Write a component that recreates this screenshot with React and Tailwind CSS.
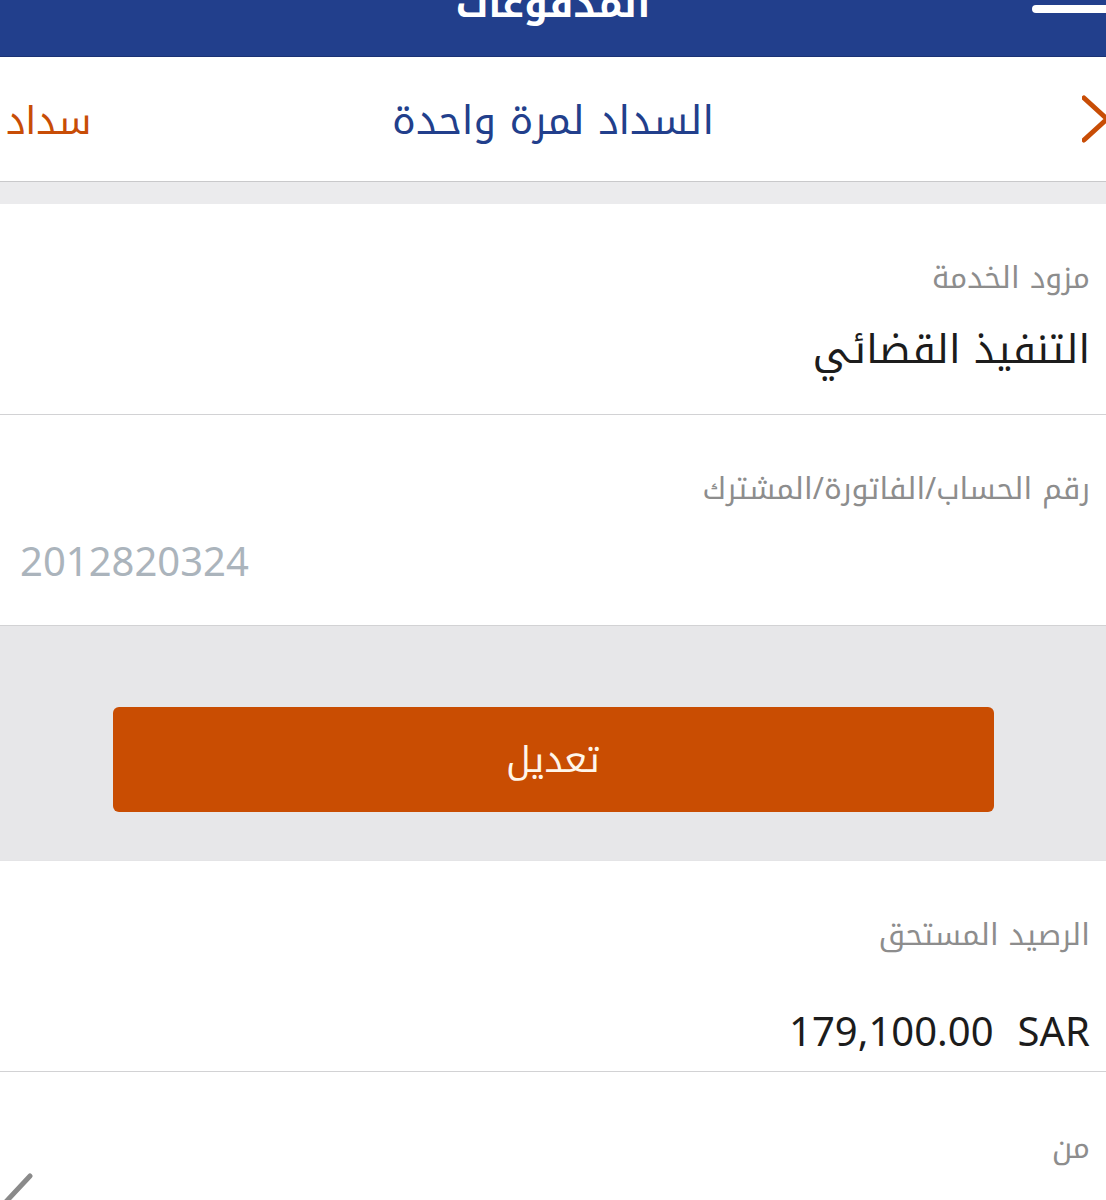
import React from "react";

const AR = { fontFamily: '"Noto Kufi Arabic", "Noto Sans Arabic", "Noto Sans", "DejaVu Sans", sans-serif' };
const LAT = { fontFamily: '"Noto Sans", "Open Sans", "DejaVu Sans", sans-serif' };

function Field({ label, children, pt = "pt-[54px]", gap = "mt-[26px]", h = "h-[211px]" }) {
  return (
    <div className={`${h} border-b border-[#d2d2d4] bg-white px-4 ${pt}`}>
      <div dir="rtl" className="text-right text-[30px] leading-[40px] text-[#8d8d8d]" style={AR}>
        {label}
      </div>
      <div className={gap}>{children}</div>
    </div>
  );
}

export default function App() {
  return (
    <div className="relative h-[1200px] w-full overflow-hidden bg-white">
      {/* top app bar */}
      <div className="relative flex h-[57px] justify-center overflow-hidden border-b border-[#1b3274] bg-[#223f8c]">
        <div dir="rtl" className="-mt-[18px] text-[38px] font-bold leading-[44px] text-white" style={AR}>
          المدفوعات
        </div>
        <div className="absolute right-[-10px] top-[5px] h-[8px] w-[84px] rounded-full bg-white" />
      </div>

      {/* tabs row */}
      <div className="grid h-[125px] grid-cols-[1fr_auto_1fr] items-center overflow-hidden border-b border-[#c9c9cb] bg-white">
        <div className="flex justify-start">
          <div dir="rtl" className="ml-[6px] pt-[4px] text-[38px] leading-[48px] text-[#c84d06]" style={AR}>
            سداد
          </div>
        </div>
        <div dir="rtl" className="pt-[4px] text-[40px] leading-[50px] text-[#223f8c]" style={AR}>
          السداد لمرة واحدة
        </div>
        <div className="flex justify-end">
          <svg width="24" height="48" viewBox="0 0 24 48" className="block">
            <path d="M2 3 L25 24 L2 45" fill="none" stroke="#c84d06" strokeWidth="5" strokeLinecap="round" strokeLinejoin="round" />
          </svg>
        </div>
      </div>

      {/* gray strip */}
      <div className="h-[22px] bg-[#ebebed]" />

      {/* service provider */}
      <Field label="مزود الخدمة">
        <div dir="rtl" className="text-right text-[40px] leading-[52px] text-[#1c1c1c]" style={AR}>
          التنفيذ القضائي
        </div>
      </Field>

      {/* account number */}
      <Field label="رقم الحساب/الفاتورة/المشترك">
        <div className="pl-[4px] text-left text-[40px] leading-[52px] text-[#abb4bc]" style={LAT}>
          2012820324
        </div>
      </Field>

      {/* edit button section */}
      <div className="flex h-[235px] items-start justify-center border-b border-[#e4e4e6] bg-[#e7e7e9] pt-[81px]">
        <button
          dir="rtl"
          className="flex h-[105px] w-[881px] items-center justify-center rounded-[6px] bg-[#c94d02] text-[36px] leading-[44px] text-[#fff6ea]"
          style={AR}
        >
          تعديل
        </button>
      </div>

      {/* due balance */}
      <Field label="الرصيد المستحق" gap="mt-[50px]">
        <div className="flex justify-end gap-[24px] text-[40px] leading-[52px] text-[#1c1c1c]" style={LAT}>
          <span>179,100.00</span>
          <span>SAR</span>
        </div>
      </Field>

      {/* from */}
      <div className="flex items-start justify-between bg-white pl-0 pr-4 pt-[56px]">
        <svg width="34" height="80" viewBox="0 0 34 80" className="mt-[44px] block">
          <path d="M30 4 L2 34" fill="none" stroke="#8a8a8a" strokeWidth="5" strokeLinecap="round" />
        </svg>
        <div dir="rtl" className="text-right text-[30px] leading-[40px] text-[#8d8d8d]" style={AR}>
          من
        </div>
      </div>
    </div>
  );
}
